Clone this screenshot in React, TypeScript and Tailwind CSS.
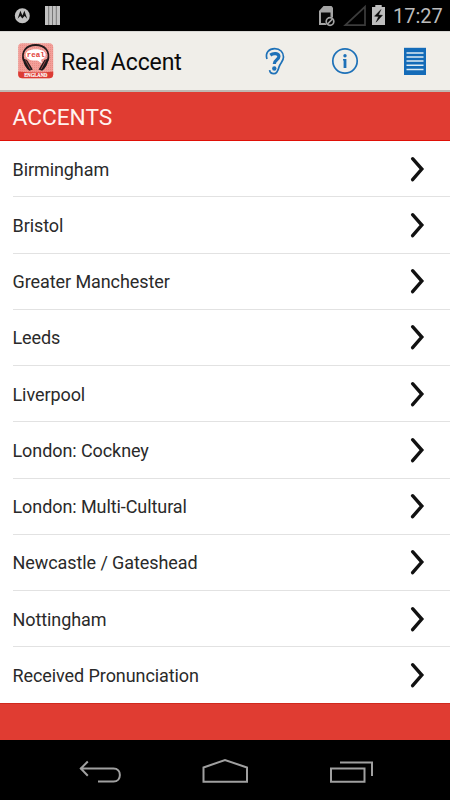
const accents = [
    "Birmingham",
    "Bristol",
    "Greater Manchester",
    "Leeds",
    "Liverpool",
    "London: Cockney",
    "London: Multi-Cultural",
    "Newcastle / Gateshead",
    "Nottingham",
    "Received Pronunciation",
];

function StatusBar() {
    return (
        <div className="flex h-[31px] shrink-0 items-center bg-black">
            {/* Notifications */}
            <svg width="100" height="31" viewBox="0 0 100 31">
                <circle cx="22.3" cy="15.8" r="7.5" fill="#c2c2c2" />
                <path d="M17.6 18.8 20.4 10.8 22.4 15.5 24.4 10.8 27.2 18.8 24.6 16 22.4 18.6 20.2 16Z" fill="#111" />
                <path d="M45 6h15v19H45z" fill="#c2c2c2" />
                <path d="M48.7 6v19M52.5 6v19M56.3 6v19" stroke="#777" strokeWidth="1" />
            </svg>

            {/* SIM, signal, battery */}
            <svg className="ml-auto" width="75" height="31" viewBox="315 0 75 31">
                <path d="M323.5 6h8l1.5 1.8V25h-14V11z" fill="#a5a5a5" />
                <path d="M321 12.5h9.5V23H321z" fill="#090909" />
                <circle cx="330" cy="21.5" r="4.8" fill="#000" />
                <circle cx="330" cy="21.5" r="3.8" fill="none" stroke="#a5a5a5" strokeWidth="1.7" />
                <path d="m327.5 24 5-5" stroke="#a5a5a5" strokeWidth="1.7" />
                <path d="M345.3 25.2 365 6.8v18.4z" fill="none" stroke="#3c3c3c" strokeWidth="1.7" />
                <path d="M375.3 5h6.4v2h3.3v18h-13V7h3.3z" fill="#bdbdbd" />
                <path d="m381 9.5-6.5 6.7 4 .4-2.4 5.6 6.4-6.9-4-.4z" fill="#080808" stroke="#080808" strokeWidth="0.4" />
            </svg>
            <span className="w-[60px] pt-px pl-[3px] text-[20px] leading-none whitespace-nowrap text-[#bcbcbc]">17:27</span>
        </div>
    );
}

function AppIcon() {
    return (
        <svg width="36" height="36" viewBox="0 0 36 36">
            <defs>
                <clipPath id="tile">
                    <rect x="0.2" y="0.2" width="35" height="35" rx="4" />
                </clipPath>
                <pattern id="dots" width="2" height="2" patternUnits="userSpaceOnUse">
                    <rect width="2" height="2" fill="#f39f99" />
                    <rect width="1" height="1" fill="#e98c85" />
                </pattern>
            </defs>
            <g clipPath="url(#tile)">
                <rect width="36" height="36" fill="url(#dots)" />
                <path d="M0 28.5q18 2 36 0V36H0z" fill="#dc3b34" />
                <path d="M5.8 18C2.5 8 9 2 17.7 2s15.2 6 11.9 16" fill="none" stroke="#24191b" strokeWidth="1.8" />
                <path d="M4.8 15.5 9 17l5.8 9.5-3.5 1.2q-5.4-4-6.5-12zM30.6 15.5 26.4 17l-5.8 9.5 3.5 1.2q5.4-4 6.5-12z" fill="#1d191b" />
                <path d="m7.6 17.3 4.8 9M27.8 17.3l-4.8 9" stroke="#b8524f" strokeWidth="0.8" />
                <path d="M17.7 6.2c6.4 0 9.9 2.2 9.9 5.6 0 2.6-1.8 4.3-4.6 5l1 3.7-4.6-3.1C12.2 18 7.8 15.6 7.8 11.9c0-3.5 3.6-5.7 9.9-5.7z" fill="#fff" />
                <text x="17.8" y="13.9" textAnchor="middle" className="font-['Liberation_Mono'] text-[7.5px] font-bold" fill="#e2463d">real</text>
                <text x="17.8" y="34" textAnchor="middle" textLength="23" lengthAdjust="spacingAndGlyphs" className="font-['Liberation_Serif'] text-[5.5px] font-bold" fill="#fff" stroke="#fff" strokeWidth="0.2">ENGLAND</text>
            </g>
        </svg>
    );
}

function Toolbar() {
    return (
        <header className="flex h-[61px] shrink-0 items-center border-t border-b-2 border-t-[#d8d7d4] border-b-[#c0b8b1] bg-[#f0eee9] pl-[18px]">
            <AppIcon />
            <h1 className="ml-[7px] pt-[2px] text-[23px] leading-none tracking-[-0.08px] text-[#0b0b0b]">Real Accent</h1>
            <svg className="ml-auto" width="190" height="40" viewBox="260 41 190 40" fill="none">
                {/* Help */}
                <path d="M267 59c-2-6 1.8-10.4 7.7-10.4 5.3 0 8.8 3.6 8.8 8.4 0 4.4-3.2 5.8-4.5 10-1 4.2-2 6.7-5.2 6.7-2.6 0-4-1.5-4.2-3.5" stroke="#1e71b8" strokeWidth="1.7" />
                <path d="M270.3 55.1c3.2-2.4 8.6-2 8.6 1.5 0 3.2-4.6 3.3-4.6 7.4" stroke="#1e71b8" strokeWidth="3.2" />
                <circle cx="274.3" cy="68.5" r="2.2" fill="#1e71b8" />
                {/* Info */}
                <circle cx="345" cy="61" r="12.2" stroke="#1e71b8" strokeWidth="1.7" />
                <circle cx="345" cy="55.7" r="1.7" fill="#1e71b8" />
                <path d="M343 59h3.4v9h-2.8v-7.4h-.6z" fill="#1e71b8" />
                {/* List */}
                <path d="M404 47.8h22V75h-22z" fill="#146bb8" />
                <path d="M406.5 53h17M406.5 57h17M406.5 61h17M406.5 65.2h17M406.5 69.5h17" stroke="#deebf2" strokeWidth="1.4" />
            </svg>
        </header>
    );
}

function AccentRow({ name }: { name: string }) {
    return (
        <li className="ml-[12.5px] flex h-[56.25px] items-center justify-between border-b border-[#e2e2e2] pr-[24px] last:border-transparent">
            <span className="pt-[2px] text-[18px] leading-none tracking-[-0.08px] text-[#2a2a2a]">{name}</span>
            <svg width="16" height="28" viewBox="0 0 16 28" fill="none">
                <path d="m2.6 3.7 9.2 10.4-9.2 10.6" stroke="#111" strokeWidth="3.4" strokeLinecap="round" />
            </svg>
        </li>
    );
}

function NavigationBar() {
    return (
        <nav className="h-[60px] shrink-0 bg-black">
            <svg width="450" height="60" viewBox="0 740 450 60" fill="none" stroke="#a0a0a0" strokeWidth="2">
                <path d="M80 768.5h33.5c8.5 0 8.5 13 0 13H98M87.8 761.5l-7 7 7 7.3" />
                <path d="M203.5 767.5v14.3H247v-14.3L225 760z" />
                <path d="M331 768.5h33.5v13.3H331zM340 762.5h32V776" />
            </svg>
        </nav>
    );
}

export default function App() {
    return (
        <div className="flex h-[800px] w-[450px] flex-col overflow-hidden bg-white font-[Roboto,sans-serif]">
            <StatusBar />
            <Toolbar />
            <div className="flex h-[49px] shrink-0 items-center border-b border-[#df1007] bg-[#e03c32] pl-[12.5px]">
                <h2 className="pt-[5px] text-[22.7px] leading-none text-[#fff2ef]">ACCENTS</h2>
            </div>
            <ul className="h-[562px] shrink-0 overflow-hidden bg-white">
                {accents.map((name) => (
                    <AccentRow key={name} name={name} />
                ))}
            </ul>
            <div className="h-[37px] shrink-0 border-t border-[#cf291e] bg-[#e03c32]" />
            <NavigationBar />
        </div>
    );
}
